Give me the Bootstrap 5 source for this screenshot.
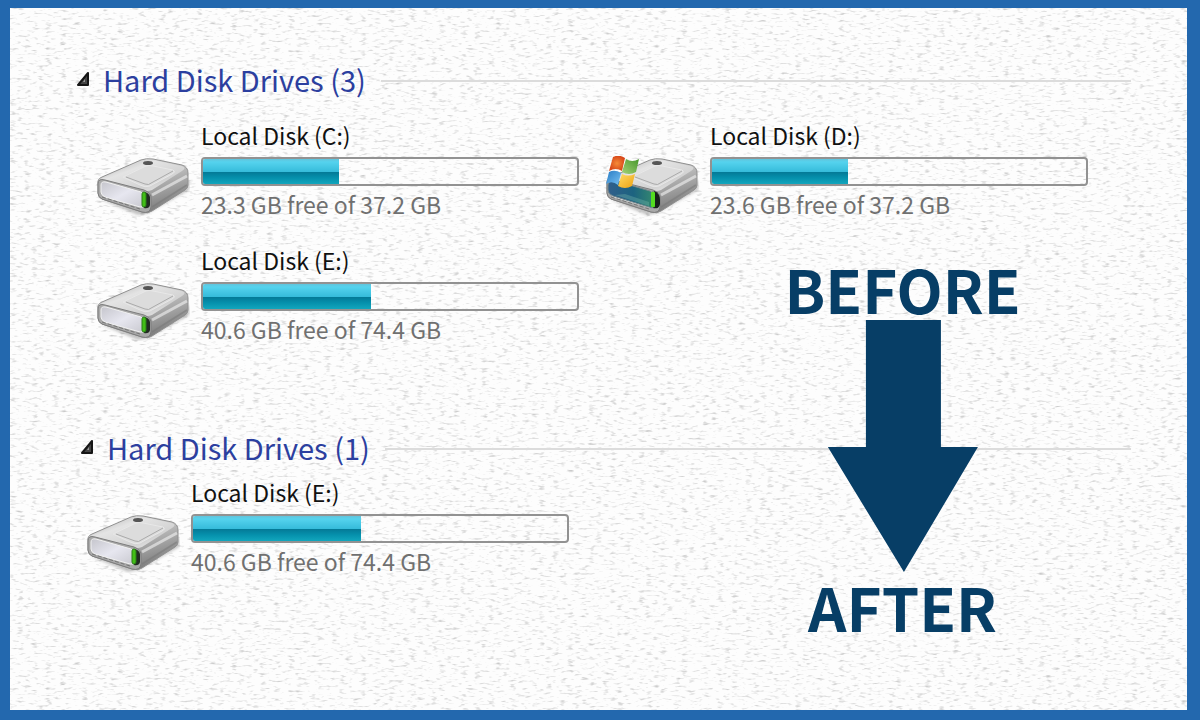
<!DOCTYPE html>
<html lang="en">
<head>
<meta charset="utf-8">
<meta name="viewport" content="width=device-width, initial-scale=1">
<title>Hard Disk Drives</title>
<link href="https://cdn.jsdelivr.net/npm/bootstrap@5.3.0/dist/css/bootstrap.min.css" rel="stylesheet">
<style>
  :root { --navy: #073e66; }
  body { font-family: "Noto Sans CJK JP", "Noto Sans", sans-serif; background: #2368ae; }
  .frame { padding: 8px 13px 10px 10px; }
  .sheet { background: #fdfdfd; padding: 51px 56px 0 67px; overflow: hidden; }
  .paper { inset: 0; width: 100%; height: 100%; }
  .group-title { height: 40px; gap: 15px; }
  .group-title button { font-size: 29px; line-height: 40px; color: #2c3f9f; gap: 14px; white-space: nowrap; }
  .rule { height: 2px; margin-top: 4px; background: #dcdcdc; }
  .drives { display: grid; grid-template-columns: 1fr 1fr; row-gap: 26px; }
  .first { padding: 21px 17px 0 19px; }
  .second { padding: 10px 27px 0 9px; }
  .after-group { margin-top: 83px; }
  .drive { gap: 11px; padding-right: 26px; }
  .drive-icon { width: 94px; height: 60px; margin-top: 36px; }
  .drive-name, .drive-free { font-size: 23px; line-height: 30px; white-space: nowrap; }
  .drive-name { color: #111; }
  .drive-free { color: #707070; }
  .capacity { height: 29px; margin: 7px 0 3px; border: 2px solid #929292; border-radius: 4px; background: transparent; --bs-progress-bar-transition: none; }
  .capacity .progress-bar { background: linear-gradient(#62c4dc 0, #55d3ee 12%, #35bbda 52%, #047b98 54%, #0590ac 75%, #12a6bd 100%); }
  .callout { top: 248px; left: 76%; transform: translateX(-50%); margin-left: -2px; color: var(--navy); }
  .callout-word { font-size: 60px; line-height: 64px; font-weight: 700; }
  .callout svg { width: 150px; height: 254px; }
</style>
</head>
<body>
<svg width="0" height="0" class="position-absolute" aria-hidden="true">
  <defs>
    <linearGradient id="topFace" x1="0" y1="0" x2="1" y2="1"><stop offset="0" stop-color="#a9a9a9"/><stop offset=".35" stop-color="#e4e4e4"/><stop offset=".7" stop-color="#d2d2d2"/><stop offset="1" stop-color="#f2f2f2"/></linearGradient>
    <linearGradient id="sideFace" x1="0" y1="0" x2=".5" y2="1"><stop offset="0" stop-color="#f1f1f1"/><stop offset=".45" stop-color="#c4c4c4"/><stop offset="1" stop-color="#808080"/></linearGradient>
    <linearGradient id="frontFace" x1="0" y1="0" x2="1" y2="1"><stop offset="0" stop-color="#c5c5cc"/><stop offset=".5" stop-color="#e7e7f0"/><stop offset="1" stop-color="#c9c9d0"/></linearGradient>
    <linearGradient id="tealFace" x1="0" y1="0" x2="1" y2="0"><stop offset="0" stop-color="#315f8b"/><stop offset=".55" stop-color="#1c6380"/><stop offset="1" stop-color="#35896f"/></linearGradient>
    <radialGradient id="flagRed"><stop offset="0" stop-color="#f58b38"/><stop offset="1" stop-color="#d84819"/></radialGradient>
    <linearGradient id="flagGreen" x1="0" y1="1" x2="1" y2="0"><stop offset="0" stop-color="#a2d276"/><stop offset="1" stop-color="#47962b"/></linearGradient>
    <linearGradient id="flagBlue" x1="0" y1="0" x2="1" y2="1"><stop offset="0" stop-color="#287bc4"/><stop offset="1" stop-color="#77c2f3"/></linearGradient>
    <linearGradient id="flagGold" x1="0" y1="0" x2="1" y2="1"><stop offset="0" stop-color="#ffdc65"/><stop offset="1" stop-color="#eda112"/></linearGradient>
    <filter id="soft" x="-20%" y="-20%" width="140%" height="140%"><feGaussianBlur stdDeviation="1.6"/></filter>
    <filter id="grain" x="0" y="0" width="100%" height="100%" color-interpolation-filters="sRGB">
      <feTurbulence type="fractalNoise" baseFrequency=".14 .4" numOctaves="2" seed="8"/>
      <feColorMatrix values="0 0 0 0 .55  0 0 0 0 .55  0 0 0 0 .55  1.3 0 0 0 -.72"/>
    </filter>
    <symbol id="drive" viewBox="0 0 94 60">
      <path d="M4 43 42 59 52 57 93 34V24L52 50Z" fill="#777" opacity=".45" filter="url(#soft)"/>
      <path d="M2 28Q1 23 6 21L45 4Q50 2 57 3L86 9Q92 11 92 17V29Q92 32 89 34L56 55Q52 58 46 56L6 43Q2 41 2 37Z" fill="url(#sideFace)" stroke="#909090"/>
      <path d="M4 23 46 5Q50 3 57 4L86 10Q91 12 86 15L56 34Q51 36 46 34L7 25Z" fill="url(#topFace)"/>
      <path d="M27 21 50 10Q53 9 57 10L77 14Q80 16 76 18L54 30Q49 32 44 29Z" fill="#dcdcdc" stroke="#e8e8e8"/>
      <path d="M30 21 49 28Q52 30 57 26L77 15" fill="none" stroke="#aaa"/>
      <ellipse cx="52" cy="7" rx="5" ry="2" fill="#555"/>
      <path d="M56 39 91 20" stroke="#f4f4f4" stroke-width="3" opacity=".6"/>
      <path d="M56 51 91 29" stroke="#777" stroke-width="2" opacity=".5"/>
      <path d="M2 28Q2 22 9 24L48 34Q56 37 55 44V51Q54 58 46 56L6 43Q2 41 2 37Z" fill="#a9a9a9" stroke="#7d7d7d"/>
      <path d="M5 29Q5 25 10 26L45 36Q48 37 48 41V49Q48 52 44 51L9 41Q5 39 5 36Z" fill="url(#frontFace)" stroke="#f2f2f2"/>
      <path d="M6 41 44 53" stroke="#777" stroke-dasharray="4 2"/>
      <path d="M49 36Q55 38 54 44V49Q53 53 48 52Z" fill="#222b22"/>
      <rect x="46" y="36" width="4" height="15" rx="2" fill="#42be16" stroke="#287d16"/>
    </symbol>
    <symbol id="systemDrive" viewBox="0 0 94 60">
      <use href="#drive" width="94" height="60"/>
      <path d="M3 29Q4 23 11 25L45 35Q49 37 49 41V49Q49 53 44 51L8 40Q3 38 3 34Z" fill="url(#tealFace)" stroke="#71858b"/>
      <path d="M20 38 44 46V50L10 39Z" fill="#79b9ac" opacity=".35"/>
      <path d="M49 35Q55 37 55 44V48Q54 53 50 52Z" fill="#17211b"/>
      <rect x="46" y="36" width="4" height="15" rx="1" fill="#54dd20"/>
      <path d="M8 1Q14-2 20 2L17 15Q11 11 4 15Z" fill="url(#flagRed)"/>
      <path d="M21 3Q27 7 34 3L31 16Q24 20 17 16Z" fill="url(#flagGreen)"/>
      <path d="M4 16Q10 13 16 17L13 29Q7 24 1 28Z" fill="url(#flagBlue)"/>
      <path d="M17 18Q23 21 30 18L27 30Q20 34 13 30Z" fill="url(#flagGold)"/>
    </symbol>
    <symbol id="expanded" viewBox="0 0 12 14"><path d="M11 1V13H1Z" fill="#444" stroke="#151515" stroke-width="2" stroke-linejoin="round"/><path d="M8 7V10H6Z" fill="#999"/></symbol>
  </defs>
</svg>

<div class="frame min-vh-100 d-flex">
  <main class="sheet position-relative flex-grow-1">
    <svg class="paper position-absolute" aria-hidden="true"><rect width="100%" height="100%" filter="url(#grain)"/></svg>

    <section class="position-relative">
      <h2 class="group-title d-flex align-items-center m-0">
        <button class="btn p-0 border-0 d-flex align-items-center" type="button" data-bs-toggle="collapse" data-bs-target="#drivesBefore" aria-expanded="true"><svg width="12" height="14" aria-hidden="true"><use href="#expanded"/></svg>Hard Disk Drives (3)</button>
        <span class="rule flex-grow-1"></span>
      </h2>
      <div id="drivesBefore" class="collapse show">
        <div class="drives first">
          <div class="drive d-flex">
            <svg class="drive-icon flex-shrink-0" aria-hidden="true"><use href="#drive"/></svg>
            <div class="flex-grow-1">
              <div class="drive-name">Local Disk (C:)</div>
              <div class="progress capacity" role="progressbar" aria-label="Used space on C" aria-valuenow="37" aria-valuemin="0" aria-valuemax="100"><div class="progress-bar" style="width:36.3%"></div></div>
              <div class="drive-free">23.3 GB free of 37.2 GB</div>
            </div>
          </div>
          <div class="drive d-flex">
            <svg class="drive-icon flex-shrink-0" aria-hidden="true"><use href="#systemDrive"/></svg>
            <div class="flex-grow-1">
              <div class="drive-name">Local Disk (D:)</div>
              <div class="progress capacity" role="progressbar" aria-label="Used space on D" aria-valuenow="37" aria-valuemin="0" aria-valuemax="100"><div class="progress-bar" style="width:36.3%"></div></div>
              <div class="drive-free">23.6 GB free of 37.2 GB</div>
            </div>
          </div>
          <div class="drive d-flex">
            <svg class="drive-icon flex-shrink-0" aria-hidden="true"><use href="#drive"/></svg>
            <div class="flex-grow-1">
              <div class="drive-name">Local Disk (E:)</div>
              <div class="progress capacity" role="progressbar" aria-label="Used space on E" aria-valuenow="45" aria-valuemin="0" aria-valuemax="100"><div class="progress-bar" style="width:45%"></div></div>
              <div class="drive-free">40.6 GB free of 74.4 GB</div>
            </div>
          </div>
        </div>
      </div>
    </section>

    <section class="after-group position-relative">
      <h2 class="group-title d-flex align-items-center m-0">
        <button class="btn p-0 border-0 d-flex align-items-center ms-1" type="button" data-bs-toggle="collapse" data-bs-target="#drivesAfter" aria-expanded="true"><svg width="12" height="14" aria-hidden="true"><use href="#expanded"/></svg>Hard Disk Drives (1)</button>
        <span class="rule flex-grow-1"></span>
      </h2>
      <div id="drivesAfter" class="collapse show">
        <div class="drives second">
          <div class="drive d-flex">
            <svg class="drive-icon flex-shrink-0" aria-hidden="true"><use href="#drive"/></svg>
            <div class="flex-grow-1">
              <div class="drive-name">Local Disk (E:)</div>
              <div class="progress capacity" role="progressbar" aria-label="Used space on E" aria-valuenow="45" aria-valuemin="0" aria-valuemax="100"><div class="progress-bar" style="width:45%"></div></div>
              <div class="drive-free">40.6 GB free of 74.4 GB</div>
            </div>
          </div>
        </div>
      </div>
    </section>

    <div class="callout position-absolute d-flex flex-column align-items-center">
      <div class="callout-word">BEFORE</div>
      <svg viewBox="0 0 150 254" role="img" aria-label="Down arrow"><path d="M38 0H113V127H150L76 252 0 127H38Z" fill="currentColor"/></svg>
      <div class="callout-word">AFTER</div>
    </div>
  </main>
</div>
<script src="https://cdn.jsdelivr.net/npm/bootstrap@5.3.0/dist/js/bootstrap.bundle.min.js"></script>
</body>
</html>
